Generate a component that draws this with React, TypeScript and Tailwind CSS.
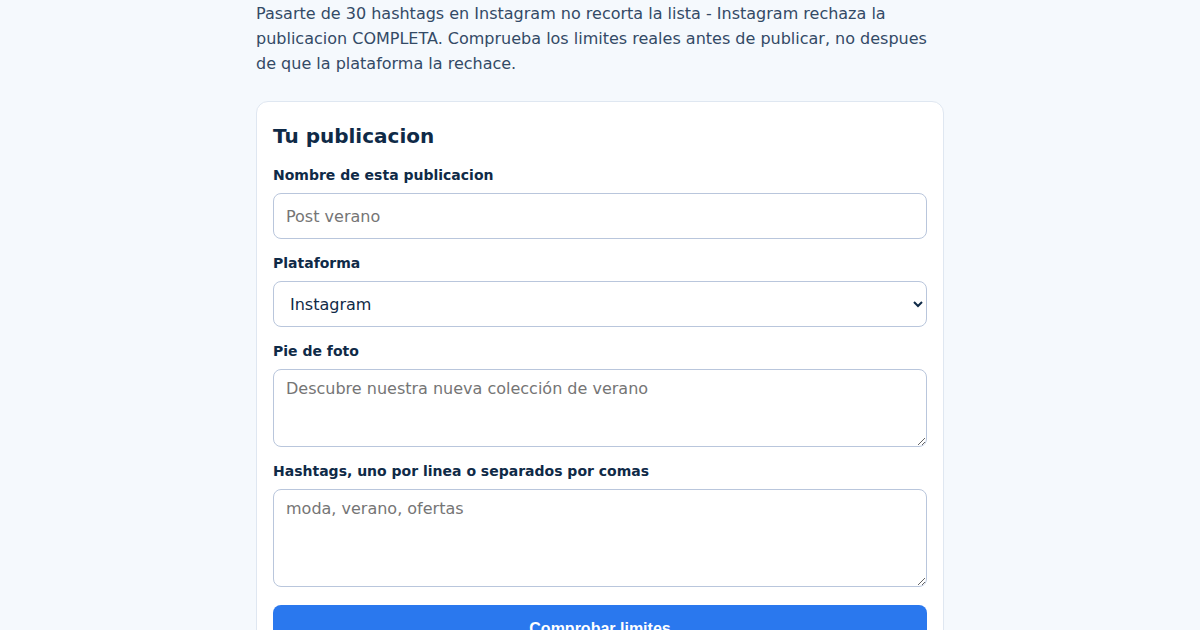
import React from 'react';

export default function App() {
  return (
    <div className="min-h-[630px] bg-[#f5f9fd] pt-px font-['DejaVu_Sans',sans-serif] text-[#0f2a47]">
      <div className="mx-auto w-[688px]">
        <p className="text-[16px] leading-[25px] text-[#334a66]">
          Pasarte de 30 hashtags en Instagram no recorta la lista - Instagram rechaza la publicacion COMPLETA. Comprueba los limites reales antes de publicar, no despues de que la plataforma la rechace.
        </p>

        <div className="mt-[25px] rounded-[12px] border border-[#dfe7f1] bg-white px-4 pt-5 pb-6">
          <h2 className="mb-[15px] text-[20px] leading-[28px] font-bold text-[#0f2a47]">Tu publicacion</h2>

          <label className="mb-2 block text-[14px] leading-[20px] font-bold text-[#0f2a47]">Nombre de esta publicacion</label>
          <input
            placeholder="Post verano"
            className="mb-[14px] block h-[46px] w-full rounded-[8px] border border-[#b9c6dc] bg-white px-3 text-[16px] placeholder:text-[#757575] outline-none"
          />

          <label className="mb-2 block text-[14px] leading-[20px] font-bold text-[#0f2a47]">Plataforma</label>
          <select className="mb-[14px] block h-[46px] w-full rounded-[8px] border border-[#b9c6dc] bg-white px-3 text-[16px] text-[#0f2a47] outline-none">
            <option>Instagram</option>
          </select>

          <label className="mb-2 block text-[14px] leading-[20px] font-bold text-[#0f2a47]">Pie de foto</label>
          <textarea
            placeholder="Descubre nuestra nueva colección de verano"
            className="mb-[14px] block h-[78px] w-full rounded-[8px] border border-[#b9c6dc] bg-white px-3 pt-[9px] pb-[10px] text-[16px] leading-[normal] placeholder:text-[#757575] outline-none"
          />

          <label className="mb-2 block text-[14px] leading-[20px] font-bold text-[#0f2a47]">Hashtags, uno por linea o separados por comas</label>
          <textarea
            placeholder="moda, verano, ofertas"
            className="block h-[98px] w-full rounded-[8px] border border-[#b9c6dc] bg-white px-3 pt-[9px] pb-[10px] text-[16px] leading-[normal] placeholder:text-[#757575] outline-none"
          />

          <button className="mt-[18px] block h-[48px] w-full rounded-[8px] bg-[#2a78ee] font-['Liberation_Sans',Arial,sans-serif] text-[16px] font-bold text-white">
            Comprobar limites
          </button>
        </div>
      </div>
    </div>
  );
}
